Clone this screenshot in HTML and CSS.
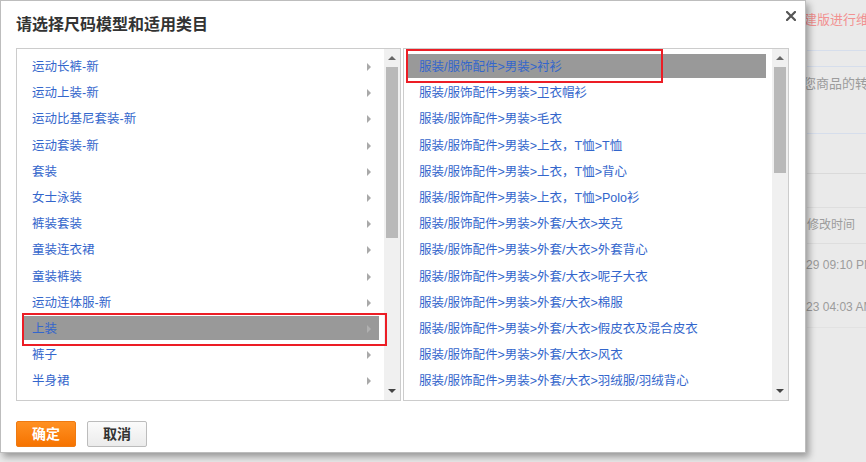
FILE: index.html
```html
<!DOCTYPE html>
<html lang="zh-CN">
<head>
  <meta charset="UTF-8">
  <meta name="viewport" content="width=device-width, initial-scale=1.0">
  <title>请选择尺码模型和适用类目</title>
  <link rel="stylesheet" href="styles.css">
</head>
<body>
  <!-- page behind the mask -->
  <div class="page">
    <p class="notice">请使用新建版进行维护</p>
    <div class="tabs"></div>
    <p class="tip">请确认您商品的转换信息</p>
    <div class="blank"></div>
    <div class="bar"></div>
    <div class="bar2"></div>
    <div class="th">修改时间</div>
    <div class="tr"><span class="time">2017-09-29 09:10 PM</span></div>
    <div class="tr last"><span class="time">2017-10-23 04:03 AM</span></div>
  </div>

  <div class="dialog">
    <div class="dialog-head">
      <h3 class="dialog-title">请选择尺码模型和适用类目</h3>
      <a class="close" title="关闭">
        <svg width="10" height="10" viewBox="0 0 10 10">
          <path d="M1 1L9 9M9 1L1 9" stroke="#555" stroke-width="2.2" stroke-linecap="square"/>
        </svg>
      </a>
    </div>

    <div class="dialog-body">
      <div class="select-box left">
        <ul class="cat-list">
          <li>运动长裤-新<i class="arrow"></i></li>
          <li>运动上装-新<i class="arrow"></i></li>
          <li>运动比基尼套装-新<i class="arrow"></i></li>
          <li>运动套装-新<i class="arrow"></i></li>
          <li>套装<i class="arrow"></i></li>
          <li>女士泳装<i class="arrow"></i></li>
          <li>裤装套装<i class="arrow"></i></li>
          <li>童装连衣裙<i class="arrow"></i></li>
          <li>童装裤装<i class="arrow"></i></li>
          <li>运动连体服-新<i class="arrow"></i></li>
          <li class="on">上装<i class="arrow"></i><span class="mark"></span></li>
          <li>裤子<i class="arrow"></i></li>
          <li>半身裙<i class="arrow"></i></li>
        </ul>
        <div class="scrollbar">
          <span class="up"></span>
          <span class="thumb"></span>
          <span class="down"></span>
        </div>
      </div>

      <div class="select-box right">
        <ul class="cat-list">
          <li class="on">服装/服饰配件&gt;男装&gt;衬衫<span class="mark"></span></li>
          <li>服装/服饰配件&gt;男装&gt;卫衣帽衫</li>
          <li>服装/服饰配件&gt;男装&gt;毛衣</li>
          <li>服装/服饰配件&gt;男装&gt;上衣，T恤&gt;T恤</li>
          <li>服装/服饰配件&gt;男装&gt;上衣，T恤&gt;背心</li>
          <li>服装/服饰配件&gt;男装&gt;上衣，T恤&gt;Polo衫</li>
          <li>服装/服饰配件&gt;男装&gt;外套/大衣&gt;夹克</li>
          <li>服装/服饰配件&gt;男装&gt;外套/大衣&gt;外套背心</li>
          <li>服装/服饰配件&gt;男装&gt;外套/大衣&gt;呢子大衣</li>
          <li>服装/服饰配件&gt;男装&gt;外套/大衣&gt;棉服</li>
          <li>服装/服饰配件&gt;男装&gt;外套/大衣&gt;假皮衣及混合皮衣</li>
          <li>服装/服饰配件&gt;男装&gt;外套/大衣&gt;风衣</li>
          <li>服装/服饰配件&gt;男装&gt;外套/大衣&gt;羽绒服/羽绒背心</li>
        </ul>
        <div class="scrollbar">
          <span class="up"></span>
          <span class="thumb"></span>
          <span class="down"></span>
        </div>
      </div>
    </div>

    <div class="dialog-foot">
      <button class="btn btn-ok">确定</button>
      <button class="btn btn-cancel">取消</button>
    </div>
  </div>
</body>
</html>
```

FILE: styles.css
```css
*{
  box-sizing: border-box;
}
body{
  margin: 0;
  height: 462px;
  overflow: hidden;
  position: relative;
  background-color: #eaeaea;
  font-family: "Liberation Sans", "Noto Sans CJK SC", sans-serif;
  font-size: 12px;
  white-space: nowrap;
}

/* page behind */
.page{
  padding-left: 807px;
  color: #9c9c9c;
}
.notice{
  margin: 0 0 0 -55px;
  height: 40px;
  line-height: 40px;
  font-size: 13px;
  color: #f29191;
}
.tabs{
  margin-top: 10px;
  height: 17px;
  border-top: 1px solid #d6deec;
  border-bottom: 1px solid #d6deec;
}
.tip{
  margin: 0 0 0 -43px;
  height: 33px;
  line-height: 33px;
  font-size: 13px;
}
.blank{
  height: 34px;
  border-bottom: 1px solid #d6deec;
}
.bar{
  height: 40px;
  border-bottom: 1px solid #dadada;
}
.bar2{
  height: 34px;
  border-bottom: 1px solid #dedede;
}
.th{
  height: 36px;
  line-height: 35px;
  border-bottom: 1px solid #dedede;
}
.tr{
  height: 42px;
  line-height: 42px;
}
.tr.last{
  border-bottom: 1px solid #e2e2e2;
}
.time{
  display: inline-block;
  margin-left: -49px;
}

/* dialog */
.dialog{
  position: absolute;
  top: 0;
  left: 0;
  width: 806px;
  background-color: #fff;
  border: 1px solid #bdbdbd;
  box-shadow: 3px 4px 7px rgba(0,0,0,0.35);
}
.dialog-head{
  display: flex;
  justify-content: space-between;
  align-items: flex-start;
  height: 47px;
  padding: 0 9px 0 15px;
}
.dialog-title{
  margin: 0;
  font-size: 16px;
  font-weight: bold;
  line-height: 48px;
  color: #333;
}
.close{
  display: block;
  width: 10px;
  height: 10px;
  margin-top: 10px;
  cursor: pointer;
}
.close svg{
  display: block;
}

.dialog-body{
  display: grid;
  grid-template-columns: 385px 386px;
  gap: 2px;
  padding: 0 15px;
}
.select-box{
  display: flex;
  height: 353px;
  border: 1px solid #ccc;
}
.cat-list{
  flex: 1;
  list-style: none;
  margin: 0;
  padding: 5px 5px 0 7px;
}
.right .cat-list{
  padding: 5px 6px 0 3px;
}
.cat-list li{
  position: relative;
  display: flex;
  align-items: center;
  justify-content: space-between;
  height: 24px;
  margin-bottom: 2.2px;
  padding: 2px 8px 0;
  font-size: 12.5px;
  line-height: 22px;
  color: #36c;
  cursor: pointer;
}
.right .cat-list li{
  padding-left: 12px;
}
.cat-list li.on{
  background-color: #999;
}
.arrow{
  width: 0;
  height: 0;
  border-left: 4px solid #a9a9a9;
  border-top: 4px solid transparent;
  border-bottom: 4px solid transparent;
}
.on .arrow{
  border-left-color: #b0b0b0;
}
.mark{
  position: absolute;
  z-index: 2;
  border: 2px solid #ec1d25;
  pointer-events: none;
}
.left .mark{
  left: -2px;
  right: -8px;
  top: -3px;
  bottom: -6px;
}
.right .mark{
  left: -1px;
  width: 257px;
  top: -5px;
  bottom: -5px;
}

.scrollbar{
  width: 16px;
  display: flex;
  flex-direction: column;
  align-items: center;
  background-color: #f0f0f0;
}
.up, .down{
  display: flex;
  align-items: center;
  justify-content: center;
  width: 100%;
  height: 18px;
}
.up::after{
  content: '';
  border-left: 4px solid transparent;
  border-right: 4px solid transparent;
  border-bottom: 4px solid #666;
}
.down{
  margin-top: auto;
}
.down::after{
  content: '';
  border-left: 4px solid transparent;
  border-right: 4px solid transparent;
  border-top: 4px solid #444;
}
.thumb{
  width: 12px;
  height: 171px;
  background-color: #b9b9b9;
}
.right .thumb{
  height: 106px;
}

.dialog-foot{
  display: flex;
  gap: 11px;
  padding: 20px 15px 5px;
}
.btn{
  width: 60px;
  height: 26px;
  padding: 0;
  border-radius: 2px;
  font-family: inherit;
  font-size: 14px;
  font-weight: bold;
  line-height: 24px;
  cursor: pointer;
}
.btn-ok{
  color: #fff;
  background: linear-gradient(#ff9022, #f67300);
  border: 1px solid #ee7a12;
}
.btn-cancel{
  color: #333;
  background: linear-gradient(#fbfbfb, #ebebeb);
  border: 1px solid #bcbcbc;
}
```
